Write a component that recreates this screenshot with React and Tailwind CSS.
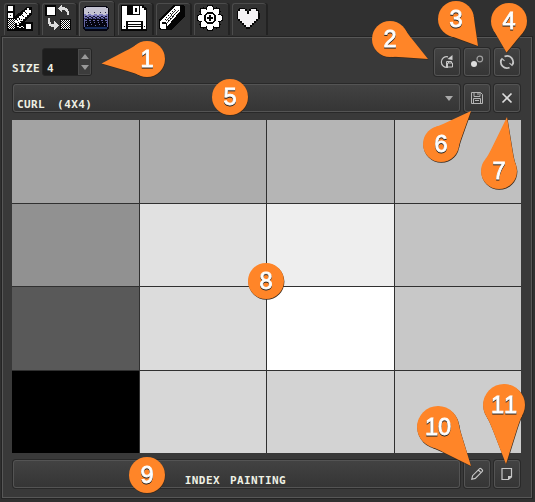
import React from 'react';

const pixelText =
  'font-["DejaVu_Sans_Mono",monospace] font-bold text-[11px] leading-[12px] tracking-[0.4px] text-[#eef0e4] whitespace-pre';

const tone = { W: '#fff', K: '#050505' };

const ROWS = [
  ['#a3a3a3', '#adadad', '#b5b5b5', '#c0c0c0'],
  ['#919191', '#e1e1e1', '#eeeeee', '#c3c3c3'],
  ['#595959', '#dcdcdc', '#ffffff', '#c8c8c8'],
  ['#000000', '#d7d7d7', '#d3d3d3', '#cdcdcd'],
];

function Pix({ r, f = 'W' }) {
  return r.map(([x, y, w, h], i) => (
    <rect key={i} x={x} y={y} width={w} height={h} fill={tone[f] || f} />
  ));
}

function Svg({ children }) {
  return (
    <svg className="shrink-0" width="26" height="26" viewBox="0 0 26 26" shapeRendering="crispEdges">
      {children}
    </svg>
  );
}

function checker(x0, y0, w, h) {
  const out = [];
  for (let y = 0; y < h; y++)
    for (let x = 0; x < w; x++) if ((x + y) % 2 === 0) out.push([x0 + x, y0 + y, 1, 1]);
  return out;
}

function PaletteIcon() {
  return (
    <Svg>
      <path d="M0 0h8v11L20 2h5v7l-8 8h9v9H0z" fill="#050505" />
      <Pix r={[[1, 1, 5, 5], [1, 8, 5, 5], [19, 19, 5, 5]]} />
      <Pix r={[[3, 10, 1, 1]]} f="K" />
      <Pix r={checker(1, 14, 7, 10)} />
      <path d="M20 3h2v2h2v3h-2v2h-2v2h-2v2h-2v2h-2v2h-2v2h-2v-2H8v-3h2v-2h2v-2h2V9h2V7h2V5h2z" fill="#fff" />
      <Pix r={[[18, 7, 1, 1], [19, 8, 1, 1], [15, 10, 1, 1], [14, 9, 1, 1], [16, 11, 1, 1], [12, 13, 1, 2], [14, 14, 1, 1], [10, 15, 1, 1], [11, 17, 1, 1], [9, 18, 1, 1], [13, 16, 1, 1]]} f="K" />
      <Pix r={[[10, 21, 2, 1], [12, 22, 2, 1], [14, 21, 2, 1], [16, 22, 1, 1]]} />
    </Svg>
  );
}

function SwapIcon() {
  return (
    <Svg>
      <Pix r={[[0, 0, 11, 11], [15, 14, 11, 11]]} f="K" />
      <Pix r={[[2, 2, 8, 8]]} />
      <Pix r={checker(16, 15, 9, 9)} />
      <path d="M16 0h1v2h3v1h2v1h1v2h1v4h-2V7h-1V6h-1V5h-3v2h-1V6h-1V5h-1V4h-1V3h1V2h1V1h1z" fill="#ddd" />
      <path d="M3 13h2v4h1v2h3v-3h1v1h1v1h1v1h1v1h1v1h-1v1h-1v1h-1v1h-1v1H9v-3H6v-1H4v-2H3z" fill="#ddd" />
    </Svg>
  );
}

function DitherIcon() {
  const rows = [];
  for (let x = 0; x < 22; x += 4) {
    rows.push([2 + x, 14, 2, 1], [4 + x, 12, 1, 1], [3 + x, 16, 1, 1]);
  }
  return (
    <Svg>
      <path d="M2 0h22v1h1v1h1v21h-1v1h-1v1H2v-1H1v-1H0V2h1V1h1z" fill="#050510" />
      <path d="M3 1h20v1h2v6H1V2h2z" fill="#c4c3d2" />
      <Pix r={[[1, 8, 24, 4]]} f="#7c7bbb" />
      <Pix r={[[1, 12, 24, 1]]} f="#39396d" />
      <Pix r={[[5, 6, 1, 1], [11, 6, 1, 1], [17, 6, 1, 1], [22, 6, 1, 1]]} f="#292946" />
      <Pix r={[[3, 8, 2, 1], [8, 8, 3, 1], [14, 8, 2, 1], [20, 8, 3, 1]]} f="#c4c3d2" />
      <Pix r={[[2, 10, 2, 1], [6, 10, 2, 1], [10, 10, 2, 1], [14, 10, 2, 1], [18, 10, 2, 1], [22, 10, 2, 1], [4, 11, 2, 2], [8, 11, 2, 2], [12, 11, 2, 2], [16, 11, 2, 2], [20, 11, 2, 2]]} f="#11112b" />
      <Pix r={rows} f="#6a69a8" />
      <Pix r={[[4, 19, 1, 1], [8, 18, 1, 1], [12, 19, 1, 1], [16, 18, 1, 1], [21, 19, 1, 1], [1, 13, 1, 8], [24, 13, 1, 8]]} f="#6665a2" />
      <Pix r={[[2, 21, 22, 2]]} f="#192f62" />
    </Svg>
  );
}

function SaveTabIcon() {
  return (
    <Svg>
      <path d="M0 0h23v2h2v1h1v23H0z" fill="#050505" />
      <path d="M1 1h5v9h13V1h2v2h2v2h2v19h-3v-8H5v8H1z" fill="#fff" />
      <Pix r={[[12, 1, 6, 8], [7, 17, 13, 2], [7, 20, 13, 1], [7, 22, 13, 2]]} />
      <Pix r={[[14, 3, 2, 4], [3, 21, 1, 1], [23, 21, 1, 1], [9, 19, 9, 1], [9, 21, 9, 1]]} f="K" />
    </Svg>
  );
}

function EraserIcon() {
  return (
    <Svg>
      <path d="M14 0h10l2 2v9L12 25H1l-1-1v-9z" fill="#050505" />
      <path d="M16 1h5v5L8 22l-2 2H2l-1-1v-6z" fill="#fff" />
      <path d="M3 17h3l2 2v4H7v-3l-1-1H3z" fill="#050505" />
      <path d="M8 18L20 5M7 16L17 5" fill="none" stroke="#050505" strokeWidth="0.8" />
      <Pix r={[[15, 4, 1, 1], [13, 6, 1, 1], [17, 7, 1, 1], [15, 9, 1, 1], [11, 8, 1, 1], [9, 10, 1, 1], [13, 11, 1, 1], [11, 13, 1, 1], [7, 12, 1, 1], [9, 15, 1, 1], [6, 14, 1, 1]]} f="K" />
    </Svg>
  );
}

function GearIcon() {
  const lobes = [0, 45, 90, 135, 180, 225, 270, 315].map((d) => [
    13 + 9.3 * Math.cos((d * Math.PI) / 180),
    13 + 9.3 * Math.sin((d * Math.PI) / 180),
  ]);
  return (
    <Svg>
      <g fill="#050505">
        <circle cx="13" cy="13" r="10.5" />
        {lobes.map(([x, y], i) => <circle key={i} cx={x} cy={y} r="4" />)}
      </g>
      <g fill="#fff">
        <circle cx="13" cy="13" r="8.6" />
        {lobes.map(([x, y], i) => <circle key={i} cx={x} cy={y} r="2.9" />)}
      </g>
      <circle cx="13" cy="13" r="5.3" fill="none" stroke="#050505" strokeWidth="1.8" />
      <path d="M12 10h2v2h2v2h-2v2h-2v-2h-2v-2h2z" fill="#050505" />
    </Svg>
  );
}

function HeartIcon() {
  return (
    <Svg>
      <path d="M4 3h6v1h2v2h2V4h2V3h6v2h2v3h1v6h-2v2h-2v2h-2v2h-2v2h-2v2h-4v-2H9v-2H7v-2H5v-2H3v-2H2V6h1V4h1z" fill="#050505" />
      <path d="M5 4h5v2h2v3h2V6h2V4h5v2h2v8h-2v2h-2v2h-2v2h-2v2h-4v-2H9v-2H7v-2H5v-2H3V6h2z" fill="#f4f2f4" />
    </Svg>
  );
}

function Tab({ active, children }) {
  return (
    <div
      className={
        active
          ? 'w-[35px] h-[36px] -ml-px mt-px pt-[4px] pl-[3px] flex items-start rounded-t-[3px] border-t border-l border-[#555] bg-[#393939] shadow-[1px_0_0_#1f1f1f]'
          : 'w-[34px] h-[32px] mt-[3px] pt-px pl-[2px] flex items-start rounded-t-[3px] border-t border-l border-[#4c4c4c] bg-[#323232] shadow-[2px_0_0_#222]'
      }
    >
      {children}
    </div>
  );
}

function Button({ className = '', children }) {
  return (
    <div
      className={
        'rounded-[3px] border border-[#545454] shadow-[0_0_0_1px_#292929] bg-linear-to-b from-[#424242] to-[#353535] flex items-center justify-center ' +
        className
      }
    >
      {children}
    </div>
  );
}

function Glyph({ children }) {
  return (
    <svg width="16" height="16" viewBox="0 0 16 16" fill="none" stroke="#c8c8c8" strokeWidth="1.2">
      {children}
    </svg>
  );
}

const PINS = [
  { n: 1, x: 147, y: 59, tx: 101.5, ty: 63.5 },
  { n: 2, x: 390, y: 39, tx: 428, ty: 59 },
  { n: 3, x: 456, y: 19, tx: 478, ty: 46 },
  { n: 4, x: 509, y: 21, tx: 506.5, ty: 52.5 },
  { n: 5, x: 230, y: 97 },
  { n: 6, x: 441, y: 144, tx: 471, ty: 111 },
  { n: 7, x: 499, y: 171, tx: 507, ty: 117 },
  { n: 8, x: 266, y: 281 },
  { n: 9, x: 147, y: 475 },
  { n: 10, x: 438, y: 427, r: 21, tx: 471, ty: 466 },
  { n: 11, x: 504, y: 405, r: 21, tx: 506, ty: 464 },
];

// Builds the tapering tail that joins a round marker to the point it indicates.
function tail({ x, y, r = 18, tx, ty }) {
  const a = Math.atan2(ty - y, tx - x);
  const dist = Math.hypot(tx - x, ty - y);
  const t = Math.min(Math.acos(r / dist), 1.0);
  const at = (u, v) =>
    `${(x + u * Math.cos(a) - v * Math.sin(a)).toFixed(2)} ${(y + u * Math.sin(a) + v * Math.cos(a)).toFixed(2)}`;
  const u = r * Math.cos(t);
  const v = r * Math.sin(t);
  const k = r * 0.18;
  const cu = u + k * Math.sin(t);
  const cv = v - k * Math.cos(t);
  const eu = cu + (dist - cu) * 0.25;
  const ev = cv * 0.75;
  return `M${at(u, v)}Q${at(cu, cv)} ${at(eu, ev)}L${at(dist, 0)}L${at(eu, -ev)}Q${at(cu, -cv)} ${at(u, -v)}L${at(0, 0)}Z`;
}

function Pins() {
  return (
    <svg className="absolute left-0 top-0 pointer-events-none" width="535" height="502">
      {PINS.map((p) => (
        <g key={p.n}>
          {[
            ['#3a2a1c', 0.4, 0.8],
            ['#ff8528', 0, 0],
          ].map(([c, dx, dy]) => (
            <g key={c} fill={c} transform={`translate(${dx} ${dy})`}>
              <circle cx={p.x} cy={p.y} r={p.r || 18} />
              {p.tx && <path d={tail(p)} />}
            </g>
          ))}
          <text
            x={p.x}
            y={p.y + 8}
            textAnchor="middle"
            strokeWidth="0.9"
            className="font-['Liberation_Sans',Arial,sans-serif] text-[23.5px] [font-kerning:none] fill-white stroke-white [filter:drop-shadow(0.5px_1px_0px_#222)]"
          >
            {p.n}
          </text>
        </g>
      ))}
    </svg>
  );
}

export default function App() {
  return (
    <div className="relative w-[535px] h-[502px] overflow-hidden bg-[#303030] flex flex-col">
      <div className="h-[37px] pl-[4px] flex items-start gap-[4px] shrink-0">
        <Tab><PaletteIcon /></Tab>
        <Tab><SwapIcon /></Tab>
        <Tab active><DitherIcon /></Tab>
        <Tab><SaveTabIcon /></Tab>
        <Tab><EraserIcon /></Tab>
        <Tab><GearIcon /></Tab>
        <Tab><HeartIcon /></Tab>
      </div>

      <div className="ml-[2px] w-[530px] h-[461px] bg-[#393939] border border-[#575757] shadow-[0_0_0_1px_#242424] px-[9px] pt-[10px] flex flex-col">
        <div className="h-[28px] flex items-start">
          <span className={pixelText + ' mt-[15px] w-[30px]'}>SIZE</span>
          <div className="w-[50px] h-[28px] rounded-[3px] border border-[#252525] bg-[#1d1d1d] flex overflow-hidden">
            <span className={pixelText + ' mt-[14px] ml-[4px] w-[31px]'}>4</span>
            <div className="flex-1 bg-[#3c3c3c] border border-[#4a4a4a] flex flex-col items-center justify-between py-[4px]">
              <svg width="8" height="5"><path d="M0 5L4 0l4 5z" fill="#999" /></svg>
              <svg width="8" height="5"><path d="M0 0l4 5 4-5z" fill="#999" /></svg>
            </div>
          </div>
          <div className="ml-auto flex gap-[4px] pr-[2px]">
            <Button className="w-[26px] h-[28px]">
              <Glyph>
                <path d="M9 2.8A5.4 5.4 0 1 0 9 13.3" />
                <path d="M7.5 13V7.5H10" strokeWidth="1" />
                <path d="M8.5 5L13.5 1v5z" fill="#d0d0d0" stroke="none" />
                <path d="M8.5 9h5v4h-5zM9.5 9V7.5h3V9" strokeWidth="1" />
              </Glyph>
            </Button>
            <Button className="w-[26px] h-[28px]">
              <Glyph>
                <circle cx="5" cy="10" r="3" fill="#ddd" stroke="none" />
                <circle cx="10.8" cy="5" r="2.8" stroke="#a0a0a0" />
              </Glyph>
            </Button>
            <Button className="w-[26px] h-[28px]">
              <Glyph>
                <path d="M5.5 2.5A6 6 0 0 1 13.2 11M10.5 13.5A6 6 0 0 1 2.8 5" strokeWidth="1.7" />
                <path d="M14.8 8.5l-1.8 3-2.5-2.3M1.2 7.5l1.8-3 2.5 2.3" strokeWidth="1.1" />
              </Glyph>
            </Button>
          </div>
        </div>

        <div className="mt-[8px] h-[28px] flex gap-[4px] pl-px pr-[2px]">
          <Button className="flex-1">
            <span className={pixelText + ' flex-1 mt-[13px] ml-[3px] [word-spacing:5px]'}>CURL (4X4)</span>
            <svg className="mr-[6px]" width="8" height="5"><path d="M0 0l4 5 4-5z" fill="#aaa" /></svg>
          </Button>
          <Button className="w-[26px]">
            <Glyph>
              <path d="M2.5 2.5h9l2 2v9h-11zM5 2.5v4h6v-4M9 3v2M4.5 13.5v-5h7v5M6 10.5h4" strokeWidth="1" stroke="#b5b5b5" />
            </Glyph>
          </Button>
          <Button className="w-[26px]">
            <Glyph><path d="M3.5 3.5l9 9M12.5 3.5l-9 9" strokeWidth="1.6" stroke="#ddd" /></Glyph>
          </Button>
        </div>

        <div className="mt-[8px] w-[509px] h-[333px] shrink-0 bg-[#303030] grid grid-cols-[127px_126px_127px_126px] grid-rows-[83px_82px_83px_82px] gap-px">
          {ROWS.flat().map((c, i) => (
            <div key={i} style={{ backgroundColor: c }} />
          ))}
        </div>

        <div className="mt-[7px] h-[28px] flex gap-[4px] pl-px pr-[2px]">
          <Button className="flex-1">
            <span className={pixelText + ' mt-[13px] mr-[2px] [word-spacing:3px]'}>INDEX PAINTING</span>
          </Button>
          <Button className="w-[26px]">
            <Glyph>
              <path d="M2.8 13.2l.8-3.5 7-7a1 1 0 0 1 1.4 0l1.3 1.3a1 1 0 0 1 0 1.4l-7 7zM9.3 4l2.7 2.7" strokeWidth="1.1" />
            </Glyph>
          </Button>
          <Button className="w-[26px]">
            <Glyph>
              <path d="M3 2.5h9.5V11L9.5 13.5H3z" />
              <path d="M9 14v-4h4z" fill="#c8c8c8" stroke="none" />
            </Glyph>
          </Button>
        </div>
      </div>
      <Pins />
    </div>
  );
}
